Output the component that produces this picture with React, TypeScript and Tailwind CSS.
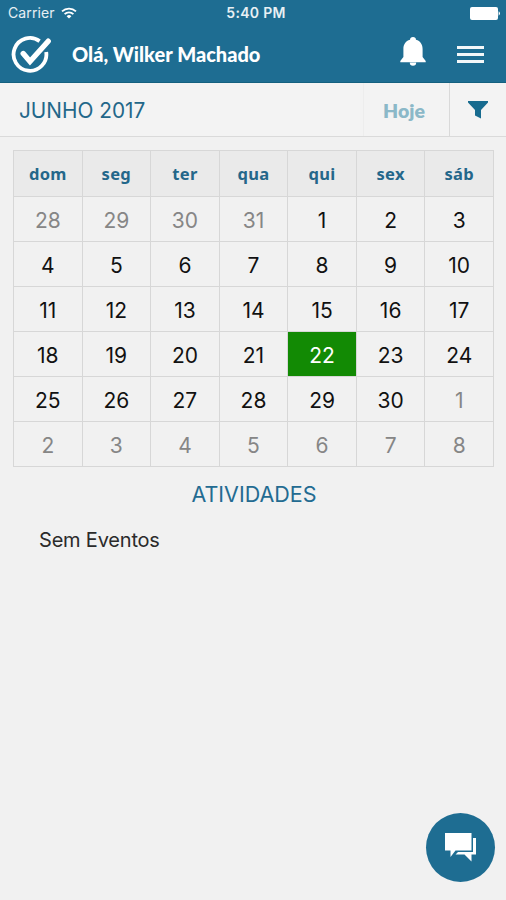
const WEEKDAYS = ['dom', 'seg', 'ter', 'qua', 'qui', 'sex', 'sáb'];

const DAYS = [
  28, 29, 30, 31,
  ...Array.from({ length: 30 }, (_, i) => i + 1),
  1, 2, 3, 4, 5, 6, 7, 8,
];

function dayStyle(index: number) {
  if (index === 25) return 'bg-[#128a04] text-white';
  if (index < 4 || index > 33) return 'bg-[#f1f1f1] text-[#868686]';
  return 'bg-[#f1f1f1] text-[#111111]';
}

function StatusBar() {
  return (
    <div className="grid h-[26px] grid-cols-3 items-center text-[14px] leading-[26px] text-white/90">
      <div className="flex items-center gap-[6px] pl-2">
        <span className="tracking-[0.1px]">Carrier</span>
        <svg width="16" height="12" viewBox="0 0 16 12" fill="none" stroke="#fff" strokeWidth="1.8">
          <path d="M1 4.4a10.2 10.2 0 0 1 14 0" />
          <path d="M3.6 7.2a6.3 6.3 0 0 1 8.8 0" />
          <path d="M8 11.6 5.6 9.2a3.4 3.4 0 0 1 4.8 0z" fill="#fff" stroke="none" />
        </svg>
      </div>
      <span className="pl-[6px] text-center font-semibold tracking-[0.3px]">5:40 PM</span>
      <div className="flex justify-end pr-[6px]">
        <svg width="30" height="13" viewBox="0 0 30 13" fill="#fff">
          <rect width="28" height="13" rx="2" />
          <path d="M28.6 4.3c1.9.8 1.9 3.6 0 4.4z" />
        </svg>
      </div>
    </div>
  );
}

function Header() {
  return (
    <header className="h-[83px] border-b border-[#14607f] bg-[#1e6d92]">
      <StatusBar />
      <div className="flex h-[56px] items-center pr-[22px] pl-[10px]">
        <svg width="44" height="42" viewBox="0 0 44 42" fill="none" stroke="#fff" strokeWidth="3.8">
          <path d="M29.6 8.1A16.4 16.4 0 1 0 36.2 19" />
          <path d="M13.2 20.500 20 28.500 38.200 8.200" strokeWidth="5.400" strokeLinejoin="miter" strokeLinecap="round" />
        </svg>
        <h1 className="ml-[18px] flex-1 font-['Lato',sans-serif] text-[20px] font-black text-white">
          Olá, Wilker Machado
        </h1>
        <svg className="mb-[5px]" width="26" height="29" viewBox="0 0 26 29" fill="#fff">
          <path d="M13 0a3 3 0 0 0-3 2.8C5.500 4 3.4 7.6 3.4 12v8L.3 24v1.2h25.400V24l-3.100-4v-8c0-4.400-2.100-8-6.600-9.200A3 3 0 0 0 13 0z" />
          <path d="M9.800 25.500h6.400a3.200 3.200 0 0 1-6.400 0z" />
        </svg>
        <div className="ml-[31px] flex w-[27px] flex-col gap-[4px]">
          <span className="h-[3px] bg-white/95" />
          <span className="h-[3px] bg-white/95" />
          <span className="h-[3px] bg-white/95" />
        </div>
      </div>
    </header>
  );
}

function Toolbar() {
  return (
    <div className="flex h-[54px] items-stretch border-b border-[#dadada] bg-[#f3f3f3]">
      <h2 className="flex flex-1 items-center pt-[2px] pl-[19px] text-[20.800px] text-[#236789]">JUNHO 2017</h2>
      <button className="flex w-[86px] items-center justify-center border-l border-[#ededed] pt-[3px] pr-[5px] font-['Lato',sans-serif] text-[19.500px] font-extrabold text-[#8bb8c8]">
        Hoje
      </button>
      <button className="flex w-[57px] items-center justify-center border-l border-[#d9d9d9]">
        <svg width="20" height="18" viewBox="0 0 20 18" fill="#176b8f">
          <path d="M0 0h20v1.500L13 9V17.500L7 14.500V9L0 1.500z" />
        </svg>
      </button>
    </div>
  );
}

function Calendar() {
  return (
    <div className="mt-[13px] ml-[13px] grid h-[317px] w-[481px] grid-cols-7 grid-rows-[45px_repeat(6,1fr)] gap-px bg-[#d7d7d7] p-px">
      {WEEKDAYS.map((day) => (
        <div
          key={day}
          className="flex items-center justify-center bg-[#eaeaea] pt-px font-['Noto_Sans',sans-serif] text-[16.500px] leading-none font-bold tracking-[0.3px] text-[#24678a]"
        >
          {day}
        </div>
      ))}
      {DAYS.map((day, index) => (
        <div
          key={index}
          className={`flex items-center justify-center pt-[2px] text-[21px] leading-none ${dayStyle(index)}`}
        >
          {day}
        </div>
      ))}
    </div>
  );
}

export default function App() {
  return (
    <div className="relative h-[900px] w-[506px] overflow-hidden bg-[#f1f1f1] font-['Inter',sans-serif]">
      <Header />
      <Toolbar />
      <Calendar />
      <h3 className="mt-[12px] pl-[2px] text-center text-[21.500px] leading-[30px] text-[#236b91]">ATIVIDADES</h3>
      <p className="mt-[16px] pl-[39px] text-[20px] leading-[30px] tracking-[-0.2px] text-[#2b2b2b]">Sem Eventos</p>
      <button className="absolute top-[813px] left-[426px] flex size-[69px] items-center justify-center rounded-full bg-[#1e6d92]">
        <svg width="31" height="29" viewBox="0 0 31 29" fill="#fff">
          <path d="M0 0h26.500v17.500H10.500L5.500 24V17.500H0z" />
          <path d="M28 5h3v16.500h-4.500V28.500l-7-7h-9l2.500-2.500H28z" />
        </svg>
      </button>
    </div>
  );
}
